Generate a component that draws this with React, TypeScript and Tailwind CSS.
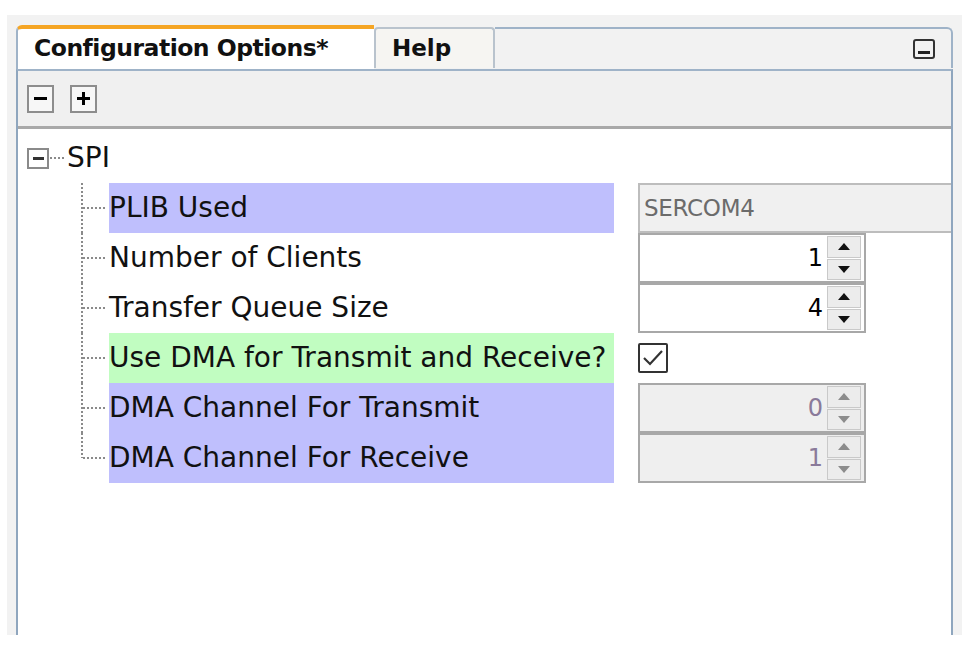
import React from 'react';

type Row = {
  label: string;
  bg: string;
  kind: 'text' | 'spin' | 'check';
  value?: string;
  disabled?: boolean;
  last?: boolean;
};

const rows: Row[] = [
  { label: 'PLIB Used', bg: 'bg-[#bfbffd]', kind: 'text', value: 'SERCOM4' },
  { label: 'Number of Clients', bg: 'bg-white', kind: 'spin', value: '1' },
  { label: 'Transfer Queue Size', bg: 'bg-white', kind: 'spin', value: '4' },
  { label: 'Use DMA for Transmit and Receive?', bg: 'bg-[#c1fdc1]', kind: 'check' },
  { label: 'DMA Channel For Transmit', bg: 'bg-[#bfbffd]', kind: 'spin', value: '0', disabled: true },
  { label: 'DMA Channel For Receive', bg: 'bg-[#bfbffd]', kind: 'spin', value: '1', disabled: true, last: true },
];

const Connector = ({ last }: { last?: boolean }) => (
  <svg width="28" height="50" className="shrink-0">
    <line x1="1" y1="0" x2="1" y2={last ? 25 : 50} stroke="#8a8a8a" strokeWidth="2" strokeDasharray="2 2" />
    <line x1="2" y1="25" x2="26" y2="25" stroke="#8a8a8a" strokeWidth="2" strokeDasharray="2 2" />
  </svg>
);

const Arrow = ({ up, disabled }: { up?: boolean; disabled?: boolean }) => (
  <div className="flex-1 flex items-center justify-center bg-[#ececec] border border-[#c9c9c9]">
    <svg width="12" height="7" viewBox="0 0 12 7">
      <path d={up ? 'M6 0 L12 7 L0 7 Z' : 'M0 0 L12 0 L6 7 Z'} fill={disabled ? '#8c8c8c' : '#111'} />
    </svg>
  </div>
);

const Spinner = ({ value, disabled }: { value: string; disabled?: boolean }) => (
  <div
    className={`w-[228px] h-[50px] flex items-center border-2 border-[#a8a8a8] ${disabled ? 'bg-[#efefef]' : 'bg-white'}`}
  >
    <div className={`flex-1 text-right pr-[4px] text-[24px] ${disabled ? 'text-[#8a7a9a]' : 'text-black'}`}>{value}</div>
    <div className="w-[34px] h-[44px] flex flex-col gap-[1px] mr-[3px]">
      <Arrow up disabled={disabled} />
      <Arrow disabled={disabled} />
    </div>
  </div>
);

export default function App() {
  return (
    <div className="w-[971px] h-[647px] bg-white pt-[15px] pl-[7px] pr-[9px]" style={{ fontFamily: '"DejaVu Sans", Verdana, sans-serif' }}>
      <div className="h-[620px] bg-[#f2f2f2] pt-[10px] px-[9px]">
        <div className="h-full flex flex-col">
          {/* tab strip */}
          <div className="h-[44px] flex items-end">
            <div className="w-[358px] h-[44px] bg-white border-t-[4px] border-[#f5a524] border-l-2 border-l-[#9fb3c8] rounded-tl-[6px] flex items-center pl-[16px]">
              <span className="text-[23.5px] font-bold text-[#111] tracking-[-0.5px]">Configuration Options*</span>
            </div>
            <div className="w-[121px] h-[41px] bg-[#f6f5f2] border-2 border-b-0 border-[#b9c3cd] rounded-t-[4px] flex items-center pl-[16px] mb-[1px]">
              <span className="text-[23px] font-bold text-[#111]">Help</span>
            </div>
            <div className="flex-1 h-[41px] border-t-2 border-r-2 border-[#9fb3c8] rounded-tr-[6px] flex items-center justify-end pr-[16px] mb-[1px]">
              <div className="w-[22px] h-[20px] border-2 border-[#333] rounded-[3px] flex items-end justify-center pb-[3px]">
                <div className="w-[12px] h-[3px] bg-[#222]" />
              </div>
            </div>
          </div>
          {/* panel */}
          <div className="flex-1 flex flex-col border-x-2 border-[#8fa6be] border-t-2 border-t-[#9fb3c8]">
            <div className="h-[58px] bg-[#f0f0f0] border-b-[3px] border-[#a9a9a9] flex items-center gap-[16px] pl-[9px]">
              <div className="w-[27px] h-[28px] border-2 border-[#8d8d8d] bg-[#f7f7f7] flex items-center justify-center">
                <div className="w-[13px] h-[3px] bg-black" />
              </div>
              <div className="w-[27px] h-[28px] border-2 border-[#8d8d8d] bg-[#f7f7f7] flex items-center justify-center relative">
                <div className="w-[13px] h-[3px] bg-black" />
                <div className="w-[3px] h-[13px] bg-black absolute" />
              </div>
            </div>
            <div className="flex-1 bg-white pt-[4px]">
              {/* SPI node */}
              <div className="h-[50px] flex items-center pl-[9px]">
                <div className="w-[22px] h-[21px] border-2 border-[#8a8a8a] flex items-center justify-center">
                  <div className="w-[11px] h-[3px] bg-[#333]" />
                </div>
                <svg width="16" height="4" className="shrink-0">
                  <line x1="1" y1="2" x2="16" y2="2" stroke="#8a8a8a" strokeWidth="2" strokeDasharray="2 2" />
                </svg>
                <span className="text-[28px] text-[#111] pl-[2px]">SPI</span>
              </div>
              {rows.map((r) => (
                <div key={r.label} className="h-[50px] flex items-center">
                  <div className="w-[63px] shrink-0" />
                  <Connector last={r.last} />
                  <div className={`w-[505px] h-[50px] ${r.bg} flex items-center text-[28px] text-[#111] shrink-0 whitespace-nowrap`}>
                    {r.label}
                  </div>
                  <div className="pl-[24px] flex items-center flex-1">
                    {r.kind === 'text' && (
                      <div className="flex-1 h-[50px] bg-[#f0f0f0] border-2 border-r-0 border-[#bdbdbd] flex items-center pl-[4px] text-[23px] text-[#6b6b6b] tracking-[-0.3px]">
                        {r.value}
                      </div>
                    )}
                    {r.kind === 'spin' && <Spinner value={r.value!} disabled={r.disabled} />}
                    {r.kind === 'check' && (
                      <div className="w-[30px] h-[30px] border-2 border-[#333] rounded-[2px] flex items-center justify-center">
                        <svg width="22" height="18" viewBox="0 0 22 18">
                          <path d="M2 9 L8 15 L20 2" fill="none" stroke="#333" strokeWidth="2.2" />
                        </svg>
                      </div>
                    )}
                  </div>
                </div>
              ))}
            </div>
          </div>
        </div>
      </div>
    </div>
  );
}
